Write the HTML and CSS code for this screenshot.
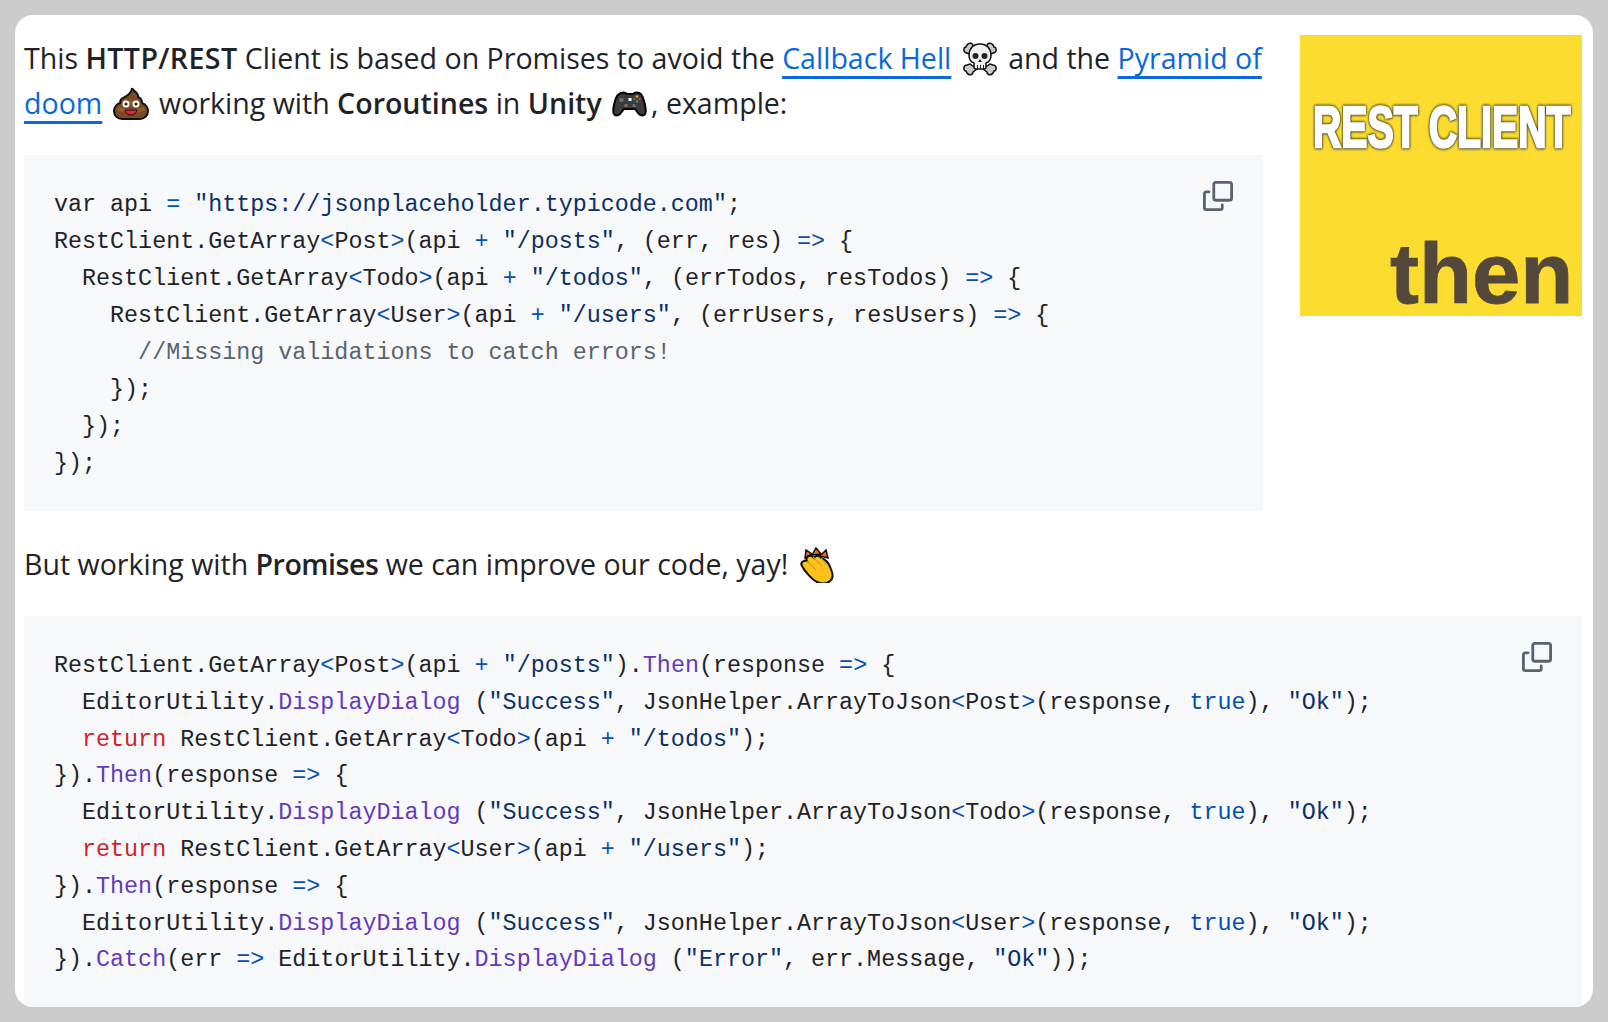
FILE: index.html
```html
<!DOCTYPE html>
<html lang="en">
<head>
<meta charset="utf-8">
<title>REST Client</title>
<link rel="stylesheet" href="styles.css">
</head>
<body>
<main class="card">
<svg class="logo" viewBox="0 0 282 281" role="img" aria-label="REST CLIENT then">
  <rect class="logo-bg" width="282" height="281"/>
  <text class="logo-rest" transform="translate(13 112) scale(1.31 1.9)">REST CLIENT</text>
  <text class="logo-then" transform="translate(90 268) scale(1.01 1)">then</text>
</svg>
<p class="para">This <strong class="wide">HTTP/REST</strong> Client is based on Promises to avoid the <a href="#">Callback Hell</a> <svg class="emoji" viewBox="0 0 36 36" aria-label="skull and crossbones"><g class="e-line"><path class="e-bone" d="M5 4c2-3 6-2 6 1l3 2-7 6-2-1c-4 0-4-6-1-6zM31 4c-2-3-6-2-6 1l-3 2 7 6 2-1c4 0 4-6 1-6zM5 32c2 3 6 2 6-1l4-3-7-5-3 1c-4 0-4 6-1 6zM31 32c-2 3-6 2-6-1l-4-3 7-5 3 1c4 0 4 6 1 6z"/><path class="e-skull" d="M18 3c-7 0-11 5-11 11 0 4 2 7 5 8v4c0 1 1 2 2 2h8c1 0 2-1 2-2v-4c3-1 5-4 5-8 0-6-4-11-11-11z"/></g><circle class="e-dark" cx="13.500" cy="15" r="3"/><circle class="e-dark" cx="22.500" cy="15" r="3"/><path class="e-dark" d="M18 18l-2 3h4zM15 24h1v4h-1zM18 24h1v4h-1zM21 24h1v4h-1z"/></svg> and the <a href="#">Pyramid of doom</a> <svg class="emoji" viewBox="0 0 36 36" aria-label="pile of poo"><path class="e-poo" d="M19 2c1 3 7 5 6 9 3 1 4 3 4 6 3 1 6 4 6 8 0 5-4 8-8 8H9c-4 0-8-3-8-8 0-4 3-7 6-8 0-3 2-5 5-6 3-2 7-4 7-9z"/><path class="e-poo-lite" d="M6 21c5 3 19 3 24 0l2 3c-6 4-22 4-28 0zM10 13c4 2 12 2 16 0l1 2c-4 3-14 3-18 0z"/><circle class="e-white" cx="13" cy="18" r="3.500"/><circle class="e-white" cx="23" cy="18" r="3.500"/><circle class="e-dark" cx="13" cy="18" r="1.600"/><circle class="e-dark" cx="23" cy="18" r="1.600"/><path class="e-mouth" d="M12 24h12c0 3-3 5-6 5s-6-2-6-5z"/></svg> working with <strong>Coroutines</strong> in <strong>Unity</strong> <svg class="emoji" viewBox="0 0 36 36" aria-label="video game"><path class="e-pad" d="M9 7c3-1 5 0 6 1h6c1-1 3-2 6-1 3 1 4 4 5 8 1 4 3 10 1 13-1 2-4 2-6 0l-4-5H12l-4 5c-2 2-5 2-6 0-2-3 0-9 1-13 1-4 3-7 6-8z"/><circle class="e-grey" cx="9.500" cy="14" r="2.300"/><circle class="e-grey" cx="22" cy="19.500" r="1.800"/><circle class="e-grey" cx="14" cy="19.500" r="1.800"/><rect class="e-white" x="16.500" y="12" width="3" height="3"/><circle class="e-gold" cx="25" cy="10.500" r="1.300"/><circle class="e-red" cx="27.500" cy="13" r="1.300"/><circle class="e-green" cx="25" cy="15.500" r="1.300"/><circle class="e-blue" cx="22.500" cy="13" r="1.300"/></svg>, example:</p>
<div class="code-wrap">
<svg class="copy" viewBox="0 0 16 16" aria-label="Copy"><path d="M0 6.75C0 5.784.784 5 1.750 5h1.500a.75.75 0 0 1 0 1.500h-1.500a.25.25 0 0 0-.25.25v7.500c0 .138.112.25.25.25h7.500a.25.25 0 0 0 .25-.25v-1.500a.75.75 0 0 1 1.500 0v1.500A1.750 1.750 0 0 1 9.250 16h-7.500A1.750 1.750 0 0 1 0 14.250Z"/><path d="M5 1.750C5 .784 5.784 0 6.750 0h7.500C15.216 0 16 .784 16 1.750v7.500A1.750 1.750 0 0 1 14.250 11h-7.500A1.750 1.750 0 0 1 5 9.250Zm1.750-.25a.25.25 0 0 0-.25.25v7.500c0 .138.112.25.25.25h7.500a.25.25 0 0 0 .25-.25v-7.500a.25.25 0 0 0-.25-.25Z"/></svg>
<pre class="code">var api <i class="op">=</i> <i class="str">"https://jsonplaceholder.typicode.com"</i>;
RestClient.GetArray<i class="op">&lt;</i>Post<i class="op">&gt;</i>(api <i class="op">+</i> <i class="str">"/posts"</i>, (err, res) <i class="op">=&gt;</i> {
  RestClient.GetArray<i class="op">&lt;</i>Todo<i class="op">&gt;</i>(api <i class="op">+</i> <i class="str">"/todos"</i>, (errTodos, resTodos) <i class="op">=&gt;</i> {
    RestClient.GetArray<i class="op">&lt;</i>User<i class="op">&gt;</i>(api <i class="op">+</i> <i class="str">"/users"</i>, (errUsers, resUsers) <i class="op">=&gt;</i> {
      <i class="com">//Missing validations to catch errors!</i>
    });
  });
});</pre>
</div>
<p class="para">But working with <strong class="tight">Promises</strong> we can improve our code, yay! <svg class="emoji" viewBox="0 0 36 36" aria-label="clapping hands"><path class="e-spark" d="M6 11l1-8 6 4zM13 8l4-7 5 6zM21 9l6-6 2 8z"/><path class="e-hand" d="M8 14c-2-4 3-7 6-4l1 1c1-3 6-3 7 0 4 1 8 5 10 11 2 5 2 10-1 12-3 3-9 3-13 1C12 32 5 23 3 19c-2-3 1-6 5-5z"/><path class="e-crease" d="M8 14l9 9M14 10l9 9M22 11l5 6"/></svg></p>
<div class="code-wrap code-wide">
<svg class="copy" viewBox="0 0 16 16" aria-label="Copy"><path d="M0 6.75C0 5.784.784 5 1.750 5h1.500a.75.75 0 0 1 0 1.500h-1.500a.25.25 0 0 0-.25.25v7.500c0 .138.112.25.25.25h7.500a.25.25 0 0 0 .25-.25v-1.500a.75.75 0 0 1 1.500 0v1.500A1.750 1.750 0 0 1 9.250 16h-7.500A1.750 1.750 0 0 1 0 14.250Z"/><path d="M5 1.750C5 .784 5.784 0 6.750 0h7.500C15.216 0 16 .784 16 1.750v7.500A1.750 1.750 0 0 1 14.250 11h-7.500A1.750 1.750 0 0 1 5 9.250Zm1.750-.25a.25.25 0 0 0-.25.25v7.500c0 .138.112.25.25.25h7.500a.25.25 0 0 0 .25-.25v-7.500a.25.25 0 0 0-.25-.25Z"/></svg>
<pre class="code">RestClient.GetArray<i class="op">&lt;</i>Post<i class="op">&gt;</i>(api <i class="op">+</i> <i class="str">"/posts"</i>).<i class="fn">Then</i>(response <i class="op">=&gt;</i> {
  EditorUtility.<i class="fn">DisplayDialog</i> (<i class="str">"Success"</i>, JsonHelper.ArrayToJson<i class="op">&lt;</i>Post<i class="op">&gt;</i>(response, <i class="op">true</i>), <i class="str">"Ok"</i>);
  <i class="kw">return</i> RestClient.GetArray<i class="op">&lt;</i>Todo<i class="op">&gt;</i>(api <i class="op">+</i> <i class="str">"/todos"</i>);
}).<i class="fn">Then</i>(response <i class="op">=&gt;</i> {
  EditorUtility.<i class="fn">DisplayDialog</i> (<i class="str">"Success"</i>, JsonHelper.ArrayToJson<i class="op">&lt;</i>Todo<i class="op">&gt;</i>(response, <i class="op">true</i>), <i class="str">"Ok"</i>);
  <i class="kw">return</i> RestClient.GetArray<i class="op">&lt;</i>User<i class="op">&gt;</i>(api <i class="op">+</i> <i class="str">"/users"</i>);
}).<i class="fn">Then</i>(response <i class="op">=&gt;</i> {
  EditorUtility.<i class="fn">DisplayDialog</i> (<i class="str">"Success"</i>, JsonHelper.ArrayToJson<i class="op">&lt;</i>User<i class="op">&gt;</i>(response, <i class="op">true</i>), <i class="str">"Ok"</i>);
}).<i class="fn">Catch</i>(err <i class="op">=&gt;</i> EditorUtility.<i class="fn">DisplayDialog</i> (<i class="str">"Error"</i>, err.Message, <i class="str">"Ok"</i>));</pre>
</div>
</main>
</body>
</html>
```
FILE: styles.css
```css
* { box-sizing: border-box; }
html, body { height: 100%; }
body {
  margin: 0;
  padding: 15px;
  background: #cccccc;
  overflow: hidden;
}
.card {
  height: 992px;
  background: #ffffff;
  border-radius: 18px;
  overflow: hidden;
  padding: 20px 11px 0 9px;
  color: #1f2328;
  font-family: "Open Sans", "Noto Sans", sans-serif;
  font-size: 28.55px;
  line-height: 45px;
}
.logo {
  float: right;
  display: block;
  width: 282px;
  height: 281px;
  margin-left: 37px;
}
.logo-bg { fill: #fcdc2f; }
.logo-rest {
  font-family: "Liberation Sans", sans-serif;
  font-weight: 700;
  font-size: 30px;
  fill: #ffffff;
  stroke: #ffffff;
  stroke-width: 1.3px;
  filter: drop-shadow(0 0 0.7px #3d3a1c) drop-shadow(0 0 0.4px #3d3a1c);
}
.logo-then {
  font-family: "Liberation Sans", sans-serif;
  font-weight: 700;
  font-size: 86px;
  fill: #54483a;
  stroke: #54483a;
  stroke-width: 0.8px;
}
.para { margin: 0 0 30px; }
strong { font-weight: 600; }
.wide { letter-spacing: 0.4px; }
.tight { letter-spacing: -0.5px; }
a {
  color: #0969da;
  text-decoration: underline;
  text-decoration-thickness: 3px;
  text-underline-offset: 7px;
}
.emoji {
  display: inline-block;
  width: 36px;
  height: 36px;
  vertical-align: -8px;
  margin: 0 3px;
}
.code-wrap {
  position: relative;
  overflow: hidden;
  background: #f6f8fa;
  margin-bottom: 30px;
}
.code-wide { margin-bottom: 0; }
.copy {
  position: absolute;
  top: 26px;
  right: 30px;
  width: 30px;
  height: 30px;
  fill: #59636e;
}
.code {
  margin: 0;
  padding: 32px 30px 28px;
  font-family: "Liberation Mono", monospace;
  font-size: 23.36px;
  line-height: 37px;
  color: #1f2328;
}
.code-wide .code { line-height: 36.8px; }
.code i { font-style: normal; }
.op { color: #0550ae; }
.str { color: #0a3069; }
.fn { color: #6639ba; }
.kw { color: #cf222e; }
.com { color: #59636e; }
.e-line path { stroke: #111; stroke-width: 1.5px; }
.e-bone { fill: #c9c9c9; }
.e-skull { fill: #f0f0f0; }
.e-dark { fill: #222222; }
.e-poo { fill: #7a4a22; stroke: #111; stroke-width: 2px; }
.e-poo-lite { fill: #965c2b; }
.e-white { fill: #ffffff; }
.e-mouth { fill: #d9263a; stroke: #111; stroke-width: 1px; }
.e-pad { fill: #3b3b3b; stroke: #000; stroke-width: 2px; }
.e-grey { fill: #6e6e6e; }
.e-gold { fill: #e8b90c; }
.e-red { fill: #d23a3a; }
.e-green { fill: #3fa34d; }
.e-blue { fill: #2f6fd0; }
.e-hand { fill: #fcc21b; stroke: #111; stroke-width: 2px; }
.e-crease { fill: none; stroke: #e0a012; stroke-width: 1.2px; }
.e-spark { fill: #f0661d; stroke: #111; stroke-width: 1.5px; }
```
